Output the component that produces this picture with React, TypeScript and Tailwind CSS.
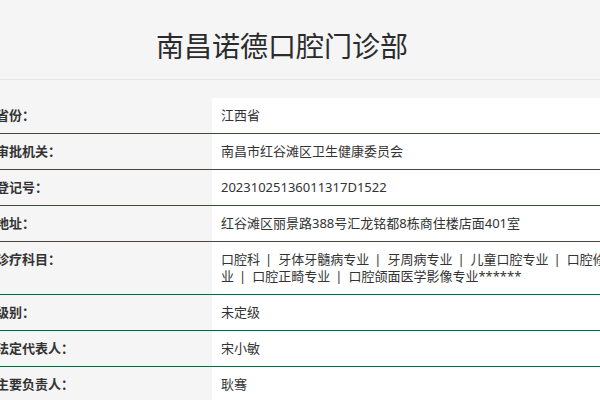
import React from "react";

const subjects = ["口腔科", "牙体牙髓病专业", "牙周病专业", "儿童口腔专业", "口腔修复专业", "口腔正畸专业", "口腔颌面医学影像专业******"];

const rows: { label: string; value: React.ReactNode }[] = [
    { label: "省份：", value: "江西省" },
    { label: "审批机关：", value: "南昌市红谷滩区卫生健康委员会" },
    { label: "登记号：", value: "20231025136011317D1522" },
    { label: "地址：", value: "红谷滩区丽景路388号汇龙铭都8栋商住楼店面401室" },
    {
        label: "诊疗科目：",
        value: subjects.map((s, i) => (
            <React.Fragment key={s}>
                {i > 0 && <span className="ml-[5px] mr-[6px]">|</span>}
                {s}
            </React.Fragment>
        )),
    },
    { label: "级别：", value: "未定级" },
    { label: "法定代表人：", value: "宋小敏" },
    { label: "主要负责人：", value: "耿骞" },
];

const App = () => {
    return (
        <div
            className="w-[600px] h-[400px] overflow-hidden bg-[#f5f5f5] text-[#333]"
            style={{ fontFamily: '"Noto Sans", "Noto Sans CJK SC", sans-serif' }}
        >
            <div className="ml-[-18px] w-[660px]">
                {/* header */}
                <div className="h-[80px] border-b border-[#e6e6e6] pt-[25px]">
                    <h1 className="w-[600px] text-center text-[28px] leading-[42px] font-normal text-[#2b2b2b]">
                        南昌诺德口腔门诊部
                    </h1>
                </div>

                {/* info table */}
                <div className="mt-[18px] flex flex-col">
                    {rows.map((row, i) => (
                        <div
                            key={row.label}
                            className={`flex text-[13px] leading-[17px] ${
                                i < rows.length - 1 ? "border-b border-[#1f5a3a]" : ""
                            }`}
                        >
                            <div className="w-[230px] shrink-0 pl-[14px] py-[9px] font-bold">{row.label}</div>
                            <div className="flex-1 bg-white pl-[9px] pr-[4px] py-[9px]">{row.value}</div>
                        </div>
                    ))}
                </div>
            </div>
        </div>
    );
};

export default App;
